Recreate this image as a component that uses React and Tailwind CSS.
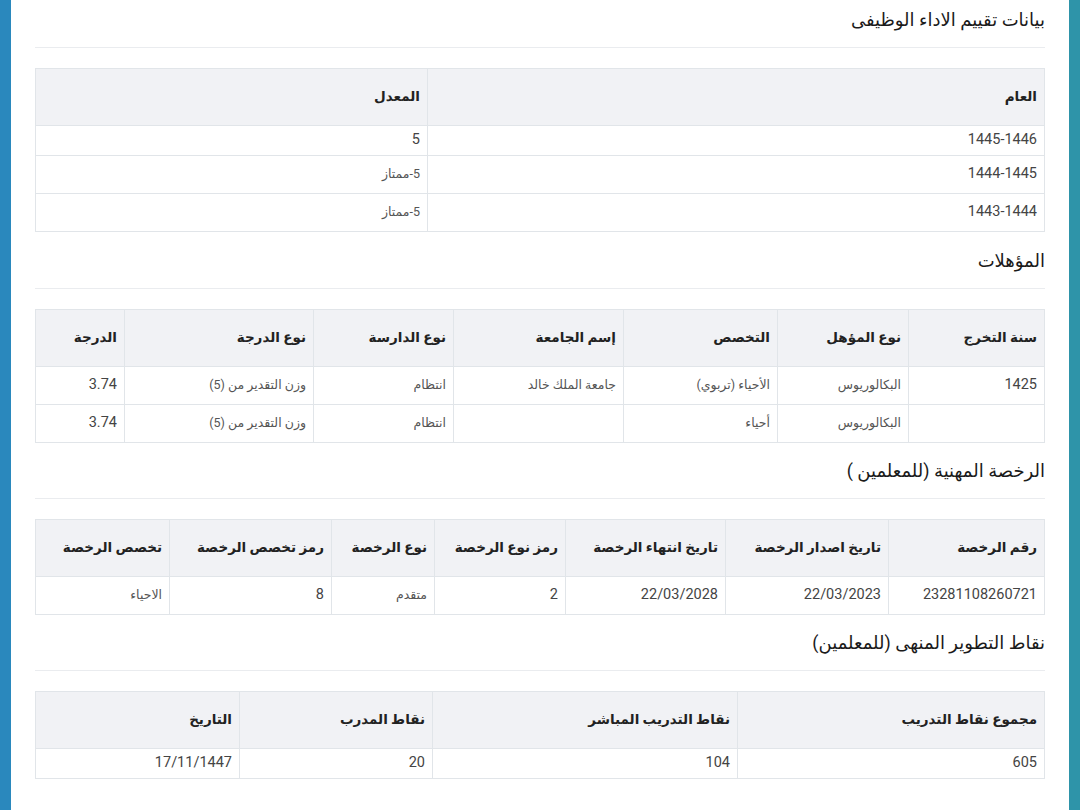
import React from 'react';

const font = { fontFamily: 'Roboto, "DejaVu Sans", sans-serif' };

const sections = [
  {
    title: 'بيانات تقييم الاداء الوظيفى',
    mb: 'mb-[15px]',
    cols: [
      { label: 'العام', w: 'w-[617px]' },
      { label: 'المعدل', w: 'w-[392px]' },
    ],
    rows: [
      { h: 'h-[30px]', cells: ['1445-1446', '5'] },
      { h: 'h-[38px]', cells: ['1444-1445', '5-ممتاز'] },
      { h: 'h-[38px]', cells: ['1443-1444', '5-ممتاز'] },
    ],
  },
  {
    title: 'المؤهلات',
    mb: 'mb-[14px]',
    cols: [
      { label: 'سنة التخرج', w: 'w-[136px]' },
      { label: 'نوع المؤهل', w: 'w-[131px]' },
      { label: 'التخصص', w: 'w-[154px]' },
      { label: 'إسم الجامعة', w: 'w-[170px]' },
      { label: 'نوع الدارسة', w: 'w-[140px]' },
      { label: 'نوع الدرجة', w: 'w-[189px]' },
      { label: 'الدرجة', w: 'w-[89px]' },
    ],
    rows: [
      { h: 'h-[38px]', cells: ['1425', 'البكالوريوس', 'الأحياء (تربوي)', 'جامعة الملك خالد', 'انتظام', 'وزن التقدير من (5)', '3.74'] },
      { h: 'h-[38px]', cells: ['', 'البكالوريوس', 'أحياء', '', 'انتظام', 'وزن التقدير من (5)', '3.74'] },
    ],
  },
  {
    title: 'الرخصة المهنية (للمعلمين )',
    mb: 'mb-[14px]',
    cols: [
      { label: 'رقم الرخصة', w: 'w-[156px]' },
      { label: 'تاريخ اصدار الرخصة', w: 'w-[163px]' },
      { label: 'تاريخ انتهاء الرخصة', w: 'w-[160px]' },
      { label: 'رمز نوع الرخصة', w: 'w-[131px]' },
      { label: 'نوع الرخصة', w: 'w-[103px]' },
      { label: 'رمز تخصص الرخصة', w: 'w-[162px]' },
      { label: 'تخصص الرخصة', w: 'w-[134px]' },
    ],
    rows: [
      { h: 'h-[38px]', cells: ['23281108260721', '22/03/2023', '22/03/2028', '2', 'متقدم', '8', 'الاحياء'] },
    ],
  },
  {
    title: 'نقاط التطوير المنهى (للمعلمين)',
    mb: 'mb-[14px]',
    cols: [
      { label: 'مجموع نقاط التدريب', w: 'w-[307px]' },
      { label: 'نقاط التدريب المباشر', w: 'w-[305px]' },
      { label: 'نقاط المدرب', w: 'w-[193px]' },
      { label: 'التاريخ', w: 'w-[204px]' },
    ],
    rows: [
      { h: 'h-[30px]', cells: ['605', '104', '20', '17/11/1447'] },
    ],
  },
];

const isArabic = (s) => /[\u0600-\u06FF]/.test(s);

const Section = ({ s }) => (
  <section className={s.mb}>
    <div className="pb-[13px] border-b border-[#eaecef]">
      <h2 className="h-[28px] leading-[28px] text-[18px] font-normal text-[#1a1a1a]">{s.title}</h2>
    </div>
    <table className="mt-[20px] w-full table-fixed border-collapse border border-[#e1e5e9]">
      <thead>
        <tr className="bg-[#f1f2f5]">
          {s.cols.map((c) => (
            <th key={c.label} className={`${c.w} h-[57px] px-[7px] text-right text-[13.5px] font-bold text-[#222] border border-[#e1e5e9]`}>
              {c.label}
            </th>
          ))}
        </tr>
      </thead>
      <tbody>
        {s.rows.map((r, i) => (
          <tr key={i}>
            {r.cells.map((v, j) => (
              <td
                key={j}
                className={`${r.h} px-[7px] text-right border border-[#e1e5e9] ${isArabic(v) ? 'text-[12.5px] text-[#555]' : 'text-[14.5px] text-[#444]'}`}
              >
                {v}
              </td>
            ))}
          </tr>
        ))}
      </tbody>
    </table>
  </section>
);

export default function App() {
  return (
    <div dir="rtl" style={font} className="flex w-[1080px] h-[810px] bg-white overflow-hidden">
      <div className="w-[11px] bg-[#2e94a9]" />
      <main className="flex-1 px-[24px] pt-[5.5px]">
        {sections.map((s) => (
          <Section key={s.title} s={s} />
        ))}
      </main>
      <div className="w-[11px] bg-[#2a88bd]" />
    </div>
  );
}
